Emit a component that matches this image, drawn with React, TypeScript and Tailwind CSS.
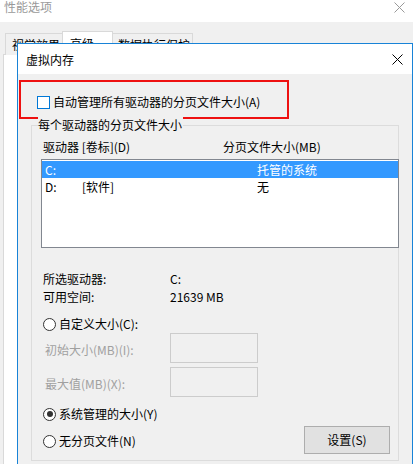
import React from 'react';

function CloseIcon({ color }: { color: string }) {
  return (
    <svg width="11" height="11" viewBox="0 0 11 11" fill="none">
      <path d="M0.5 0.5 L10.5 10.5 M10.5 0.5 L0.5 10.5" stroke={color} strokeWidth="1" />
    </svg>
  );
}

function Radio({ checked }: { checked?: boolean }) {
  return (
    <span className="w-[13px] h-[13px] rounded-full border border-[#333333] bg-white flex items-center justify-center shrink-0">
      {checked && <span className="w-[6px] h-[6px] rounded-full bg-[#333333]" />}
    </span>
  );
}

const drives = [
  { letter: 'C:', label: '', size: '托管的系统', selected: true },
  { letter: 'D:', label: '[软件]', size: '无', selected: false },
];

export default function App() {
  return (
    <div className="relative w-[413px] h-[464px] overflow-hidden bg-[#f0f0f0] text-[12px] leading-[16px] text-black font-['Noto_Sans_CJK_SC',sans-serif]">
      {/* parent window */}
      <div className="h-[22px] bg-white flex items-start justify-between pl-[4px] pr-[8px]">
        <span className="text-[#999999] mt-[-1px]">性能选项</span>
        <span className="mt-[2px]">
          <CloseIcon color="#999999" />
        </span>
      </div>
      <div className="flex items-end pl-[5px] pt-[9px] h-[33px]">
        <div className="h-[22px] w-[58px] border border-b-0 border-[#d9d9d9] bg-[#f0f0f0] pl-[6px] pt-[3px]">视觉效果</div>
        <div className="relative h-[24px] w-[51px] border border-b-0 border-[#d9d9d9] bg-white pl-[7px] pt-[4px] ml-[-1px] z-10">高级</div>
        <div className="h-[22px] w-[81px] border border-b-0 border-[#d9d9d9] bg-[#f0f0f0] pl-[5px] pt-[3px] ml-[-1px]">数据执行保护</div>
      </div>
      <div className="ml-[3px] mt-[-1px] h-[420px] w-[430px] bg-white border border-[#d9d9d9]" />

      {/* virtual memory dialog */}
      <div className="absolute z-20 left-[17px] top-[43px] w-[396px] h-[440px] border border-[#1883d7] flex flex-col">
        <div className="h-[30px] bg-white flex items-center justify-between pl-[8px] pr-[9px] shrink-0">
          <span className="mt-[1px]">虚拟内存</span>
          <CloseIcon color="#000000" />
        </div>
        <div className="relative flex-1 bg-[#f0f0f0]">
          <div className="absolute left-[1px] top-[6px] w-[270px] h-[39px] border-2 border-[#ee1111] pointer-events-none" />

          <div className="flex items-center gap-[3px] pl-[19px] pt-[20px] h-[36px]">
            <span className="w-[13px] h-[13px] border border-[#0078d7] bg-white shrink-0" />
            <span>自动管理所有驱动器的分页文件大小(A)</span>
          </div>

          <div className="relative ml-[13px] mt-[15px] w-[368px] h-[336px] border border-[#dcdcdc]">
            <span className="absolute left-[6px] top-[-9px] bg-[#f0f0f0] pr-[1px]">每个驱动器的分页文件大小</span>

            <div className="flex pl-[11px] pt-[13px]">
              <span className="w-[180px]">驱动器 [卷标](D)</span>
              <span>分页文件大小(MB)</span>
            </div>

            <div className="ml-[9px] mt-[4px] w-[358px] h-[89px] border border-[#828790] bg-white pt-[1px]">
              {drives.map((d) => (
                <div
                  key={d.letter}
                  className={
                    d.selected
                      ? 'flex items-center h-[17px] bg-[#3399ff] text-white'
                      : 'flex items-center h-[17px]'
                  }
                >
                  <span className="w-[40px] pl-[3px]">{d.letter}</span>
                  <span className="w-[175px]">{d.label}</span>
                  <span>{d.size}</span>
                </div>
              ))}
            </div>

            <div className="mt-[22px] pl-[11px]">
              <div className="flex h-[18px] items-center">
                <span className="w-[127px]">所选驱动器:</span>
                <span>C:</span>
              </div>
              <div className="flex h-[18px] items-center">
                <span className="w-[127px]">可用空间:</span>
                <span>21639 MB</span>
              </div>
            </div>

            <div className="flex items-center gap-[3px] pl-[11px] mt-[10px] h-[16px]">
              <Radio />
              <span>自定义大小(C):</span>
            </div>

            <div className="flex items-center pl-[13px] mt-[1px]">
              <span className="w-[125px] text-[#a0a0a0] mt-[3px]">初始大小(MB)(I):</span>
              <span className="w-[88px] h-[30px] border border-[#cccccc]" />
            </div>
            <div className="flex items-center pl-[13px] mt-[4px]">
              <span className="w-[125px] text-[#a0a0a0] mt-[3px]">最大值(MB)(X):</span>
              <span className="w-[88px] h-[30px] border border-[#cccccc]" />
            </div>

            <div className="flex items-center gap-[3px] pl-[11px] mt-[9px] h-[16px]">
              <Radio checked />
              <span>系统管理的大小(Y)</span>
            </div>

            <div className="flex items-center justify-between pl-[11px] pr-[8px] mt-[4px]">
              <div className="flex items-center gap-[3px] mt-[2px]">
                <Radio />
                <span>无分页文件(N)</span>
              </div>
              <button className="w-[86px] h-[28px] bg-[#e1e1e1] border border-[#adadad] text-black">设置(S)</button>
            </div>
          </div>
        </div>
      </div>
    </div>
  );
}
